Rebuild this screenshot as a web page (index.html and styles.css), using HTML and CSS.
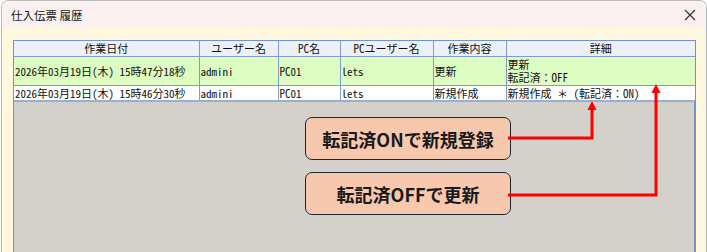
FILE: index.html
```html
<!DOCTYPE html>
<html lang="ja">
<head>
<meta charset="utf-8">
<title>仕入伝票 履歴</title>
<link rel="stylesheet" href="styles.css">
</head>
<body>
<div class="window">
  <div class="titlebar">
    <span class="title">仕入伝票 履歴</span>
    <span class="close" aria-label="閉じる">
      <svg width="12" height="12" viewBox="0 0 12 12"><path d="M1 1 L11 11 M11 1 L1 11" stroke="#333" stroke-width="1.2" fill="none"/></svg>
    </span>
  </div>
  <div class="content">
    <div class="gridarea">
      <table class="grid">
        <colgroup>
          <col class="c1"><col class="c2"><col class="c3"><col class="c4"><col class="c5"><col class="c6">
        </colgroup>
        <thead>
          <tr>
            <th>作業日付</th><th>ユーザー名</th><th>PC名</th><th>PCユーザー名</th><th>作業内容</th><th>詳細</th>
          </tr>
        </thead>
        <tbody>
          <tr class="sel">
            <td>2026年03月19日(木) 15時47分18秒</td><td>admini</td><td>PC01</td><td>lets</td><td>更新</td><td><div class="ln">更新</div><div class="ln">転記済<span class="fw">：</span>OFF</div></td>
          </tr>
          <tr class="last">
            <td>2026年03月19日(木) 15時46分30秒</td><td>admini</td><td>PC01</td><td>lets</td><td>新規作成</td><td>新規作成 <span class="fw">＊</span> (転記済<span class="fw">：</span>ON)</td>
          </tr>
        </tbody>
      </table>
    </div>
  </div>

  <div class="callout callout-on">転記済ONで新規登録</div>
  <div class="callout callout-off">転記済OFFで更新</div>
  <svg class="arrows" width="707" height="252" viewBox="0 0 707 252">
    <path d="M508 138 H592 V108" stroke="#ff0000" stroke-width="3" fill="none"/>
    <polygon points="592,101 587.5,110 596.5,110" fill="#ff0000"/>
    <path d="M508 195 H656 V91" stroke="#ff0000" stroke-width="3" fill="none"/>
    <polygon points="656,84 651.5,93 660.5,93" fill="#ff0000"/>
  </svg>
</div>
</body>
</html>
```
FILE: styles.css
```css
html, body {
  margin: 0;
  padding: 0;
  height: 100%;
  background: #ffffff;
}
body {
  font-family: "Noto Sans CJK JP", "Noto Sans", sans-serif;
  color: #1a1a1a;
  overflow: hidden;
}
.window {
  position: relative;
  box-sizing: border-box;
  height: 252px;
  margin-left: 1px;
  width: 706px;
  border: 1px solid #b9b9b9;
  border-bottom: none;
  border-radius: 7px 7px 0 0;
  display: flex;
  flex-direction: column;
  overflow: hidden;
}
.titlebar {
  height: 27px;
  flex: none;
  background: #fbf0f0;
  display: flex;
  align-items: center;
  justify-content: space-between;
  padding: 0 8px 0 9px;
}
.title {
  font-size: 11.5px;
  color: #1a1a1a;
}
.close {
  display: flex;
  width: 16px;
  height: 16px;
  align-items: center;
  justify-content: center;
}
.content {
  flex: 1;
  background: #fff8df;
  padding: 12px 10px 0 11px;
  display: flex;
  flex-direction: column;
}
.gridarea {
  flex: 1;
  background: #d4d0ca;
  border-left: 1px solid #7591cc;
  border-right: 2px solid #6f8fd0;
  border-top: 1px solid #7591cc;
}
.grid {
  border-collapse: collapse;
  table-layout: fixed;
  width: 681px;
  font-size: 11px;
  font-feature-settings: "hwid";
  color: #111;
}
.fw {
  font-feature-settings: normal;
}
.c1 { width: 185px; }
.c2 { width: 79px; }
.c3 { width: 62px; }
.c4 { width: 93px; }
.c5 { width: 73px; }
.c6 { width: 189px; }
.grid th {
  background: #ecf0f9;
  font-weight: normal;
  height: 15px;
  line-height: 15px;
  padding: 0;
  text-align: center;
  border-right: 1px solid #7f9bd2;
  border-bottom: 1px solid #7f9bd2;
  white-space: nowrap;
  overflow: hidden;
}
.grid td {
  padding: 0 0 0 1px;
  line-height: 14px;
  border-right: 1px solid #7f9bd2;
  border-bottom: 1px solid #7f9bd2;
  white-space: nowrap;
  overflow: hidden;
  vertical-align: middle;
}
.grid .ln {
  height: 13px;
  line-height: 13px;
}
.grid th:last-child, .grid td:last-child {
  border-right: none;
}
.grid tr.sel td {
  background: #dcfcc1;
  height: 28px;
}
.grid tr.last td {
  background: #ffffff;
  height: 14px;
  border-bottom: 2px solid #97aed6;
}
.callout {
  position: absolute;
  left: 303px;
  width: 206px;
  height: 43px;
  box-sizing: border-box;
  border: 1.5px solid #1c2a36;
  border-radius: 7px;
  background: #f7c8ae;
  display: flex;
  align-items: center;
  justify-content: center;
  font-size: 18px;
  font-weight: bold;
  color: #1a1a1a;
}
.callout-on { top: 116px; }
.callout-off { top: 171px; }
.arrows {
  position: absolute;
  left: -2px;
  top: -1px;
  pointer-events: none;
}
```
